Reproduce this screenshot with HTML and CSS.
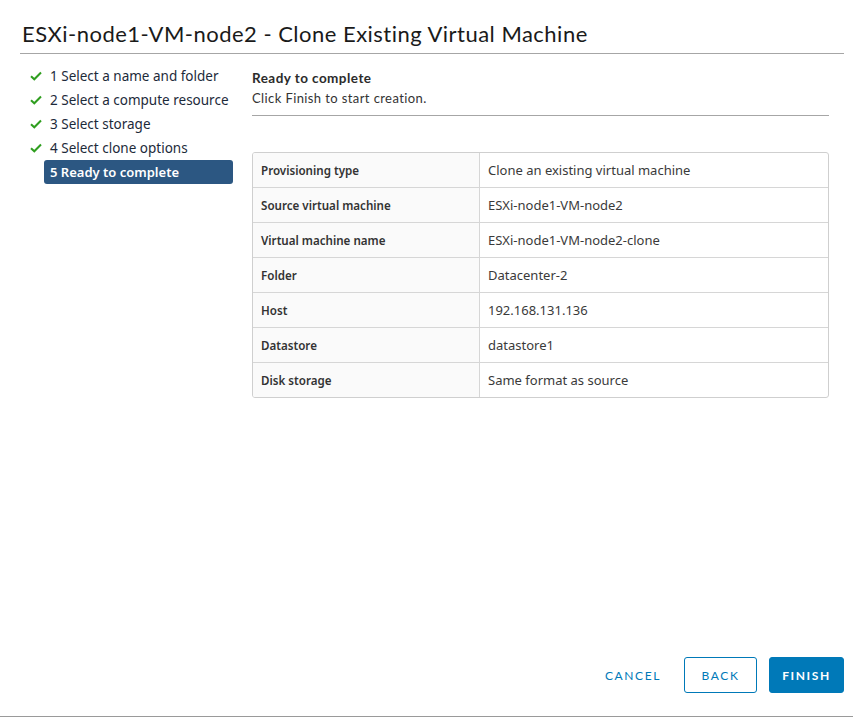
FILE: index.html
```html
<!DOCTYPE html>
<html>
<head>
<meta charset="utf-8">
<link rel="stylesheet" href="styles.css">
</head>
<body>
<div class="dialog">
  <header class="dialog-header">
    <h1 class="title">ESXi-node1-VM-node2 - Clone Existing Virtual Machine</h1>
  </header>
  <div class="dialog-body">
    <nav class="steps">
      <div class="step done"><svg class="check" viewBox="0 0 12 10"><path d="M1 5.2 L4.3 8.3 L11 1.5" fill="none" stroke="#2f9e1f" stroke-width="2"/></svg><span>1 Select a name and folder</span></div>
      <div class="step done"><svg class="check" viewBox="0 0 12 10"><path d="M1 5.2 L4.3 8.3 L11 1.5" fill="none" stroke="#2f9e1f" stroke-width="2"/></svg><span>2 Select a compute resource</span></div>
      <div class="step done"><svg class="check" viewBox="0 0 12 10"><path d="M1 5.2 L4.3 8.3 L11 1.5" fill="none" stroke="#2f9e1f" stroke-width="2"/></svg><span>3 Select storage</span></div>
      <div class="step done"><svg class="check" viewBox="0 0 12 10"><path d="M1 5.2 L4.3 8.3 L11 1.5" fill="none" stroke="#2f9e1f" stroke-width="2"/></svg><span>4 Select clone options</span></div>
      <div class="step active"><span>5 Ready to complete</span></div>
    </nav>
    <main class="content">
      <div class="content-head">
        <div class="content-title">Ready to complete</div>
        <div class="content-sub">Click Finish to start creation.</div>
      </div>
      <div class="summary">
        <div class="row"><div class="label">Provisioning type</div><div class="value">Clone an existing virtual machine</div></div>
        <div class="row"><div class="label">Source virtual machine</div><div class="value">ESXi-node1-VM-node2</div></div>
        <div class="row"><div class="label">Virtual machine name</div><div class="value">ESXi-node1-VM-node2-clone</div></div>
        <div class="row"><div class="label">Folder</div><div class="value">Datacenter-2</div></div>
        <div class="row"><div class="label">Host</div><div class="value">192.168.131.136</div></div>
        <div class="row"><div class="label">Datastore</div><div class="value">datastore1</div></div>
        <div class="row"><div class="label">Disk storage</div><div class="value">Same format as source</div></div>
      </div>
    </main>
  </div>
  <footer class="dialog-footer">
    <button class="btn btn-link">CANCEL</button>
    <button class="btn btn-outline">BACK</button>
    <button class="btn btn-primary">FINISH</button>
  </footer>
</div>
</body>
</html>
```

FILE: styles.css
```css
* { box-sizing: border-box; }
html, body { margin: 0; padding: 0; background: #fff; }
body { font-family: "Open Sans", "Noto Sans", sans-serif; color: #333; }

.dialog {
  height: 717px;
  display: flex;
  flex-direction: column;
  border-bottom: 1px solid #9a9a9a;
}

.dialog-header {
  margin: 0 9px 0 20px;
  padding: 21px 0 6px 2px;
  border-bottom: 1px solid #a6a6a6;
}
.title {
  margin: 0;
  font-family: "Lato", sans-serif;
  font-weight: 400;
  font-size: 22px;
  line-height: 26px;
  color: #1a1a1a;
  letter-spacing: 0.48px;
}

.dialog-body {
  flex: 1;
  display: flex;
  padding-left: 24px;
}

.steps {
  width: 209px;
  margin-top: 10px;
  display: flex;
  flex-direction: column;
}
.step {
  height: 24px;
  display: flex;
  align-items: center;
  font-family: "Noto Sans", "Open Sans", sans-serif;
  font-size: 13.5px;
  color: #1d2a3a;
  white-space: nowrap;
}
.step .check {
  width: 12px;
  height: 10px;
  margin: 0 8px 0 6px;
}
.step.active {
  margin-left: 20px;
  padding-left: 6px;
  background: #2c5782;
  color: #fff;
  font-weight: 600;
  font-size: 13px;
  border-radius: 3px;
}

.content {
  margin-left: 19px;
  width: 577px;
}
.content-head {
  padding-top: 14px;
  padding-bottom: 6px;
  border-bottom: 1px solid #a6a6a6;
}
.content-title {
  font-family: "Lato", sans-serif;
  font-weight: 700;
  font-size: 13.5px;
  line-height: 20px;
  letter-spacing: 0.45px;
  color: #2b2b2b;
}
.content-sub {
  font-family: "Lato", sans-serif;
  font-size: 13px;
  line-height: 21px;
  letter-spacing: 0.4px;
  color: #333;
}

.summary {
  margin-top: 36px;
  border: 1px solid #cfcfcf;
  border-radius: 3px;
  overflow: hidden;
}
.row {
  display: flex;
  height: 35px;
  border-top: 1px solid #d6d6d6;
}
.row:first-child { border-top: none; height: 34px; }
.label {
  width: 227px;
  flex: none;
  background: #fafafa;
  border-right: 1px solid #d6d6d6;
  padding: 0 8px;
  display: flex;
  align-items: center;
  font-family: "Noto Sans", sans-serif;
  font-size: 11.6px;
  font-weight: 600;
  color: #333;
}
.value {
  flex: 1;
  padding: 0 8px;
  display: flex;
  align-items: center;
  font-family: "Noto Sans", sans-serif;
  font-size: 13px;
  color: #3a3a3a;
}

.dialog-footer {
  display: flex;
  justify-content: flex-end;
  align-items: center;
  gap: 12px;
  padding: 0 9px 23px 0;
}
.btn {
  height: 36px;
  padding: 0 12px;
  font-family: "Lato", sans-serif;
  font-size: 12px;
  letter-spacing: 1.6px;
  border-radius: 3px;
  cursor: pointer;
}
.btn-link {
  background: none;
  border: 1px solid transparent;
  color: #0079b8;
  margin-right: -2px;
}
.btn-outline {
  background: #fff;
  border: 1px solid #0079b8;
  color: #0079b8;
  width: 73px;
}
.btn-primary {
  background: #0079b8;
  border: 1px solid #0079b8;
  color: #fff;
  font-weight: 700;
  width: 75px;
}
```
